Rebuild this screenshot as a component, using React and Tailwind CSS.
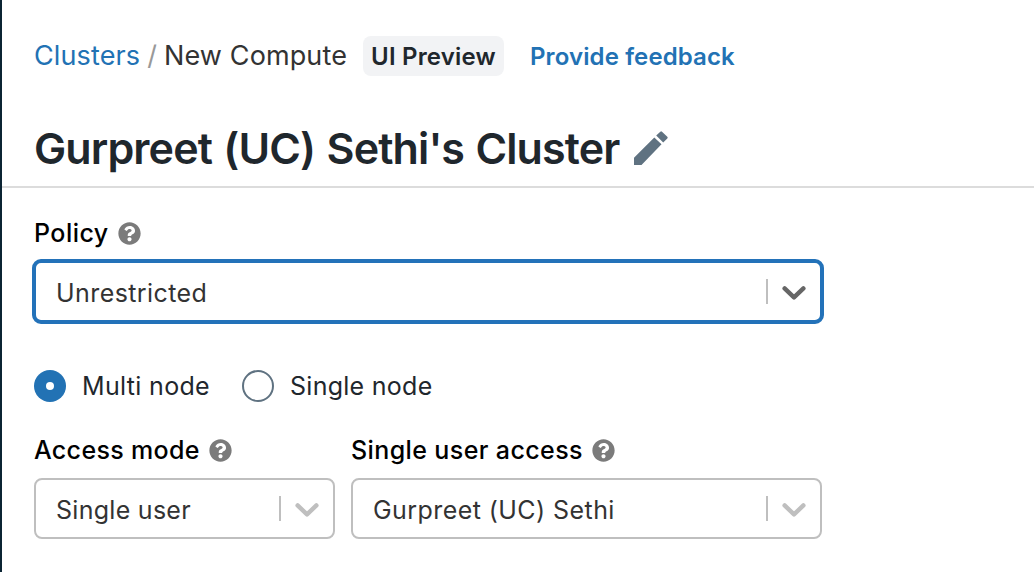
function HelpIcon() {
  return (
    <svg viewBox="0 0 512 512" className="h-[23px] w-[23px] shrink-0 fill-[#7b7b7b]" aria-hidden="true">
      <path d="M504 256c0 136.997-111.043 248-248 248S8 392.997 8 256C8 119.083 119.043 8 256 8s248 111.083 248 248zM262.655 90c-54.497 0-89.255 22.957-116.549 63.758-3.536 5.286-2.353 12.415 2.715 16.258l34.699 26.31c5.205 3.947 12.621 3.008 16.665-2.122 17.864-22.658 30.113-35.797 57.303-35.797 20.429 0 45.698 13.148 45.698 32.958 0 14.976-12.363 22.667-32.534 33.976C247.128 238.528 216 254.941 216 296v4c0 6.627 5.373 12 12 12h56c6.627 0 12-5.373 12-12v-1.333c0-28.462 83.186-29.647 83.186-106.667 0-58.002-60.165-102-116.531-102zM256 338c-25.365 0-46 20.635-46 46 0 25.364 20.635 46 46 46s46-20.636 46-46c0-25.365-20.635-46-46-46z" />
    </svg>
  );
}

function Field({ label, labelClass, value, valueClass, focused }) {
  const box = focused
    ? "-mx-0.5 mt-2 h-[65px] border-4 border-[#2372b9] pl-5 pr-3.5 text-[#666666] rounded-[9px]"
    : "mt-[10px] h-[61px] border-2 border-[#bfbfbf] pl-5 pr-3.5 text-[#bfbfbf] rounded-[8px]";
  return (
    <div className="min-w-0">
      <div className="flex h-9 items-center gap-[9px]">
        <span className={"font-medium text-black " + labelClass}>{label}</span>
        <HelpIcon />
      </div>
      <div className={"flex items-center " + box}>
        <span className={"flex-1 pt-0.5 text-[#333333] " + valueClass}>{value}</span>
        <span className="h-[25px] w-0.5 bg-[#bfbfbf]" />
        <svg viewBox="0 0 24 18" className="ml-[14px] h-[18px] w-6" aria-hidden="true">
          <path d="M2.6 5.4 12 14.4 21.4 5.4" fill="none" stroke="currentColor" strokeWidth="4.4" strokeLinecap="round" strokeLinejoin="round" />
        </svg>
      </div>
    </div>
  );
}

export default function App() {
  return (
    <main className="h-[572px] w-full overflow-hidden border-l-2 border-[#0b2433] bg-white font-['Inter',sans-serif] text-[25px] leading-9 whitespace-nowrap">
      <header className="flex h-[188px] flex-col border-b-2 border-[#dcdcdc] pl-8">
        <div className="mt-9 flex h-10 items-center">
          <nav className="flex w-[313px] text-[27px] tracking-[0.12px]">
            <a className="text-[#2272b4]">Clusters</a>
            <span className="pr-[7px] pl-[7px] text-[#999999]">/</span>
            <span className="text-[#333333]">New Compute</span>
          </nav>
          <span className="ml-4 flex h-10 w-[141px] items-center justify-center rounded-[8px] bg-[#f2f3f5] pt-0.5 text-[24px] font-semibold tracking-[0.2px] text-[#1f272d]">UI Preview</span>
          <a className="ml-[26px] pt-0.5 text-[24px] font-semibold tracking-[0.12px] text-[#2272b4]">Provide feedback</a>
        </div>
        <div className="mt-11 flex h-14 items-center">
          <h1 className="w-[600px] text-[43px] font-semibold tracking-[-0.88px] [word-spacing:1.4px] text-[#1f272d]">Gurpreet (UC) Sethi's Cluster</h1>
          <svg viewBox="0 0 34 34" className="h-[34px] w-[34px] fill-[#5f7281]" aria-hidden="true">
            <path d="M0 34V26.7L20.3 6.4 27.5 13.3 7.5 34ZM22.2 4.6 26.3.7Q27.2-.1 28 .7L33.3 5.8Q34.1 6.6 33.3 7.4L29.2 11.5Z" />
          </svg>
        </div>
      </header>
      <div className="w-[820px] pl-8 pt-[27px]">
        <Field label="Policy" value="Unrestricted" focused labelClass="tracking-[0.45px]" valueClass="tracking-[0.42px]" />
        <div className="mt-[46px] flex h-8 items-center text-[#1f272d]">
          <span className="grid h-8 w-8 place-items-center rounded-full bg-[#2272b4]">
            <span className="h-2 w-2 rounded-full bg-white" />
          </span>
          <span className="ml-4 w-[128px] tracking-[0.33px]">Multi node</span>
          <span className="ml-8 h-8 w-8 rounded-full border-2 border-[#5f7281]" />
          <span className="ml-4 tracking-[0.27px]">Single node</span>
        </div>
        <div className="mt-[30px] grid grid-cols-[301px_471px] gap-4">
          <Field label="Access mode" value="Single user" labelClass="tracking-[0.33px]" valueClass="tracking-[0.28px]" />
          <Field label="Single user access" value="Gurpreet (UC) Sethi" labelClass="tracking-[0.39px]" valueClass="tracking-[0.43px]" />
        </div>
      </div>
    </main>
  );
}
